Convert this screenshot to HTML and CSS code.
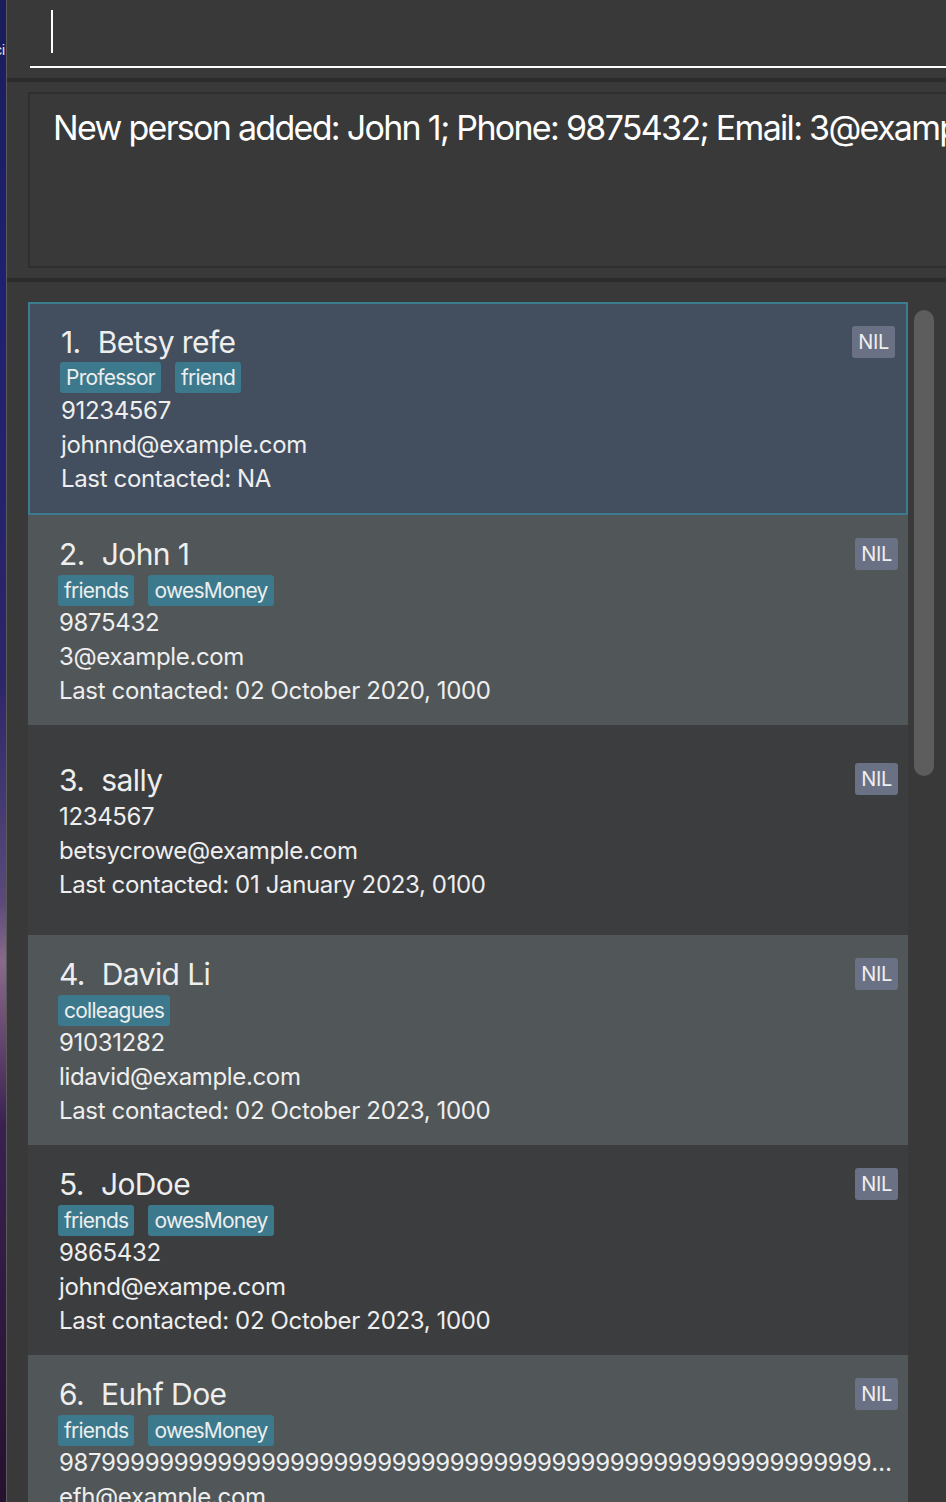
FILE: index.html
```html
<!DOCTYPE html>
<html>
<head>
<meta charset="utf-8">
<link rel="stylesheet" href="styles.css">
</head>
<body>
<div class="wall"><span class="wall-text">ci</span></div>
<div class="app">
  <div class="cmd">
    <div class="cmd-field"><span class="caret"></span></div>
  </div>
  <div class="sep"></div>
  <div class="result-wrap">
    <div class="result">New person added: John 1; Phone: 9875432; Email: 3@example.com; Address: 311, Clementi Ave 2, #02-25</div>
  </div>
  <div class="sep"></div>
  <div class="list-area">
    <div class="list">
      <div class="card selected light-sel">
        <div class="info">
          <div class="name"><span class="idx">1.</span><span>Betsy refe</span></div>
          <div class="tags"><span class="tag">Professor</span><span class="tag">friend</span></div>
          <div class="line">91234567</div>
          <div class="line">johnnd@example.com</div>
          <div class="line">Last contacted: NA</div>
        </div>
        <span class="nil">NIL</span>
      </div>
      <div class="card light">
        <div class="info">
          <div class="name"><span class="idx">2.</span><span>John 1</span></div>
          <div class="tags"><span class="tag">friends</span><span class="tag">owesMoney</span></div>
          <div class="line">9875432</div>
          <div class="line">3@example.com</div>
          <div class="line">Last contacted: 02 October 2020, 1000</div>
        </div>
        <span class="nil">NIL</span>
      </div>
      <div class="card dark notags">
        <div class="info">
          <div class="name"><span class="idx">3.</span><span>sally</span></div>
          <div class="line">1234567</div>
          <div class="line">betsycrowe@example.com</div>
          <div class="line">Last contacted: 01 January 2023, 0100</div>
        </div>
        <span class="nil">NIL</span>
      </div>
      <div class="card light">
        <div class="info">
          <div class="name"><span class="idx">4.</span><span>David Li</span></div>
          <div class="tags"><span class="tag">colleagues</span></div>
          <div class="line">91031282</div>
          <div class="line">lidavid@example.com</div>
          <div class="line">Last contacted: 02 October 2023, 1000</div>
        </div>
        <span class="nil">NIL</span>
      </div>
      <div class="card dark">
        <div class="info">
          <div class="name"><span class="idx">5.</span><span>JoDoe</span></div>
          <div class="tags"><span class="tag">friends</span><span class="tag">owesMoney</span></div>
          <div class="line">9865432</div>
          <div class="line">johnd@exampe.com</div>
          <div class="line">Last contacted: 02 October 2023, 1000</div>
        </div>
        <span class="nil">NIL</span>
      </div>
      <div class="card light">
        <div class="info">
          <div class="name"><span class="idx">6.</span><span>Euhf Doe</span></div>
          <div class="tags"><span class="tag">friends</span><span class="tag">owesMoney</span></div>
          <div class="line long">987999999999999999999999999999999999999999999999999999999999999999</div>
          <div class="line">efh@example.com</div>
          <div class="line">Last contacted: 02 October 2023, 1000</div>
        </div>
        <span class="nil">NIL</span>
      </div>
    </div>
    <div class="scroll"><div class="thumb"></div></div>
  </div>
</div>
</body>
</html>
```
FILE: styles.css
```css
html, body {
  margin: 0;
  padding: 0;
  height: 1502px;
  overflow: hidden;
}
body {
  display: flex;
  background: #393939;
  font-family: Inter, "Noto Sans", sans-serif;
  color: #eeeeee;
}
.wall {
  width: 6px;
  flex: 0 0 6px;
  border-right: 1px solid #5b5b5b;
  background: linear-gradient(180deg, #1a1d5a 0%, #1f2070 20%, #2c2568 45%, #5a4a7a 60%, #8a6a8a 64%, #3a2050 75%, #24122e 100%);
  overflow: hidden;
  position: relative;
}
.wall-text {
  position: absolute;
  top: 42px;
  left: -5px;
  font-size: 14px;
  color: #e8e8e8;
  font-family: "Liberation Sans", sans-serif;
}
.app {
  flex: 1;
  display: flex;
  flex-direction: column;
  min-width: 0;
}
.app > * {
  flex-shrink: 0;
}
.cmd {
  height: 78px;
  padding-left: 23px;
  box-sizing: border-box;
}
.cmd-field {
  height: 68px;
  border-bottom: 2px solid #ffffff;
  box-sizing: border-box;
  padding: 10px 0 0 21px;
}
.caret {
  display: block;
  width: 2px;
  height: 43px;
  background: #ffffff;
}
.sep {
  height: 4px;
  background: #2c2c2c;
}
.result-wrap {
  padding: 10px 0 10px 21px;
}
.result {
  height: 176px;
  box-sizing: border-box;
  border: 2px solid #2e2e2e;
  border-right: none;
  padding: 12px 0 0 23px;
  font-size: 34px;
  line-height: 44px;
  color: #ffffff;
  white-space: nowrap;
  overflow: hidden;
  letter-spacing: -1.7px;
}
.list-area {
  display: flex;
  padding: 20px 0 0 21px;
  gap: 6px;
}
.list {
  width: 880px;
  display: flex;
  flex-direction: column;
}
.card {
  height: 210px;
  flex-shrink: 0;
  box-sizing: border-box;
  display: flex;
  align-items: center;
  padding: 2px 10px 0 31px;
  position: relative;
}
.card.light { background: #515658; }
.card.dark { background: #3c3d3f; }
.card.selected {
  height: 213px;
  background: #434e5e;
  border: 2px solid #3b7d8f;
  padding: 0 11px 0 31px;
}
.info {
  flex: 1;
  min-width: 0;
  display: flex;
  flex-direction: column;
}
.name {
  font-size: 30px;
  line-height: 40px;
  display: flex;
  gap: 17px;
  letter-spacing: -0.6px;
}
.tags {
  display: flex;
  gap: 14px;
  height: 32px;
  align-items: center;
  margin-left: -1px;
}
.tag {
  background: #3d798c;
  font-size: 21px;
  line-height: 31px;
  padding: 0 6px;
  border-radius: 3px;
  letter-spacing: -0.75px;
}
.line {
  font-size: 24px;
  line-height: 34px;
  white-space: nowrap;
  letter-spacing: -0.35px;
}
.line.long {
  overflow: hidden;
  text-overflow: ellipsis;
  width: 834px;
}
.nil {
  position: absolute;
  top: 23px;
  right: 10px;
  background: #6b7185;
  font-size: 20px;
  line-height: 32px;
  padding: 0 6px;
  border-radius: 3px;
  letter-spacing: -0.3px;
}
.card.selected .nil { right: 11px; top: 22px; }
.card.notags .nil { top: 38px; }
.scroll {
  width: 20px;
  padding-top: 8px;
}
.thumb {
  height: 466px;
  background: #5d5d5d;
  border-radius: 10px;
}
```
